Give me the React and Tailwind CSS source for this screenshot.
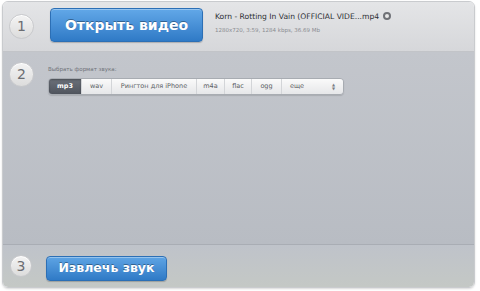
import React, { useState } from "react";

const formats = [
  { name: "mp3", w: "w-[32px]" },
  { name: "wav", w: "w-[30px]" },
  { name: "Рингтон для iPhone", w: "w-[85px]" },
  { name: "m4a", w: "w-[28px]" },
  { name: "flac", w: "w-[27px]" },
  { name: "ogg", w: "w-[30px]" },
];

const StepBadge = ({ n, size = "w-[25px] h-[25px]" }) => (
  <div
    className={`${size} shrink-0 rounded-full bg-gradient-to-b from-[#f4f4f4] to-[#dcdcdc] border border-[#c8c9cc] shadow-[inset_0_1px_0_#fff] flex items-center justify-center text-[14px] text-[#6b6d72]`}
  >
    {n}
  </div>
);

const App = () => {
  const [format, setFormat] = useState("mp3");

  return (
    <div
      className="w-[480px] h-[291px] bg-white pt-[1px] pl-[2px]"
      style={{ fontFamily: "Verdana, 'DejaVu Sans', sans-serif" }}
    >
      <div className="w-[473px] h-[287px] rounded-[6px] overflow-hidden flex flex-col border border-[#c9cbce] shadow-[0_1px_2px_rgba(0,0,0,0.15)]">
        {/* Step 1 */}
        <div className="h-[50px] shrink-0 bg-gradient-to-b from-[#e4e5e7] to-[#d6d7da] flex items-center gap-[10px] pl-[6px] border-b border-[#c2c4c8] shadow-[0_1px_0_#eceef0]">
          <StepBadge n="1" />
          <button className="w-[153px] h-[34px] mt-[-3px] ml-[6px] rounded-[4px] bg-gradient-to-b from-[#62a8e8] to-[#2f7ac6] border border-[#2c6fb5] shadow-[inset_0_1px_0_rgba(255,255,255,0.35),0_1px_1px_rgba(0,0,0,0.2)] text-white font-bold text-[14px] [text-shadow:0_-1px_0_rgba(0,0,0,0.35)]"
            style={{ fontFamily: "'DejaVu Sans', sans-serif" }}
          >
            Открыть видео
          </button>
          <div className="ml-[2px] mt-[-8px] flex flex-col gap-[4px]">
            <div className="flex items-center gap-[4px] text-[7.6px] text-[#2d2f33]">
              Korn - Rotting In Vain (OFFICIAL VIDE...mp4
              <span className="w-[8px] h-[8px] rounded-full border-[2px] border-[#6f7176] bg-[#e8e8e8]" />
            </div>
            <div className="text-[5.5px] text-[#8a8c91]">
              1280x720, 3:59, 1284 kbps, 36.69 Mb
            </div>
          </div>
        </div>

        {/* Step 2 */}
        <div className="flex-1 bg-gradient-to-b from-[#c3c6cc] to-[#b8bcc3] flex items-start gap-[10px] pl-[6px] pt-[10px] border-b border-[#a9adb4] shadow-[0_1px_0_#cfd2d6]">
          <StepBadge n="2" />
          <div className="ml-[4px] mt-[3px] flex flex-col gap-[5px]">
            <div className="text-[5.5px] text-[#6f737a]">Выбрать формат звука:</div>
            <div className="flex h-[17px] rounded-[4px] overflow-hidden border border-[#a8acb2] shadow-[0_1px_1px_rgba(0,0,0,0.12)] text-[6.5px]">
              {formats.map((f) => (
                <button
                  key={f.name}
                  onClick={() => setFormat(f.name)}
                  className={
                    format === f.name
                      ? `${f.w} bg-gradient-to-b from-[#6b7079] to-[#50555e] text-white font-bold shadow-[inset_0_1px_2px_rgba(0,0,0,0.3)]`
                      : `${f.w} bg-gradient-to-b from-[#fafafa] to-[#e6e7e9] text-[#5b5e64] border-l border-[#d3d5d8]`
                  }
                >
                  {f.name}
                </button>
              ))}
              <button className="w-[62px] px-[8px] bg-gradient-to-b from-[#fafafa] to-[#e6e7e9] text-[#5b5e64] border-l border-[#d3d5d8] flex items-center justify-between">
                еще
                <span className="flex flex-col text-[4px] leading-[4px] text-[#7a7d83]">
                  <span>▲</span>
                  <span>▼</span>
                </span>
              </button>
            </div>
          </div>
        </div>

        {/* Step 3 */}
        <div className="h-[42px] shrink-0 bg-gradient-to-b from-[#bfc3ca] to-[#c4c8c5] flex items-center gap-[10px] pl-[7px]">
          <StepBadge n="3" size="w-[22px] h-[22px]" />
          <button className="w-[121px] h-[25px] mt-[4px] ml-[4px] rounded-[4px] bg-gradient-to-b from-[#5ea4e4] to-[#2f7ac6] border border-[#2c6fb5] shadow-[inset_0_1px_0_rgba(255,255,255,0.35),0_1px_1px_rgba(0,0,0,0.2)] text-white font-bold text-[12.5px] [text-shadow:0_-1px_0_rgba(0,0,0,0.35)]"
            style={{ fontFamily: "'DejaVu Sans', sans-serif" }}
          >
            Извлечь звук
          </button>
        </div>
      </div>
    </div>
  );
};

export default App;
